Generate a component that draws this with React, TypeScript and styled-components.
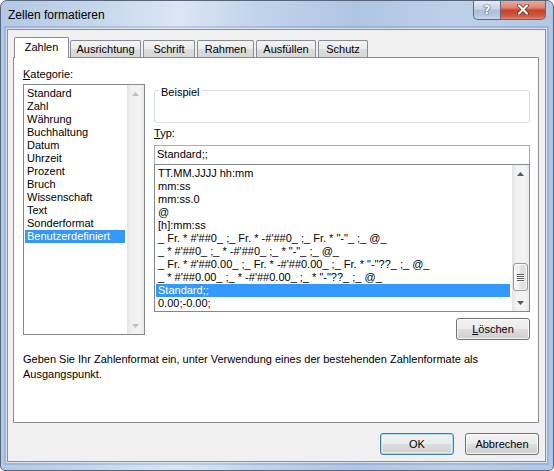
import React from "react";
import styled, { createGlobalStyle, css } from "styled-components";

const GlobalStyle = createGlobalStyle`
  html, body { margin: 0; padding: 0; background: #ffffff; }
  body {
    font-family: "Liberation Sans", Arial, sans-serif;
    font-size: 11px;
    color: #000;
  }
  * { box-sizing: border-box; }
`;

const Window = styled.div`
  width: 554px;
  height: 471px;
  display: flex;
  flex-direction: column;
  padding: 0 7px 8px 6px;
  border: 1px solid #56657b;
  border-radius: 7px 7px 5px 5px;
  background: linear-gradient(
    90deg,
    #b3c8e5 0%,
    #c6d7ed 18%,
    #dbe6f4 32%,
    #c2d4eb 46%,
    #afc5e2 64%,
    #bdd0e9 82%,
    #b1c7e4 100%
  );
  overflow: hidden;
`;

const TitleBar = styled.div`
  height: 28px;
  display: flex;
  align-items: flex-start;
`;

const Title = styled.div`
  font-size: 12px;
  line-height: 28px;
  padding-left: 1px;
  color: #000;
`;

const Captions = styled.div`
  margin: -1px 0 0 auto;
  display: flex;
  height: 20px;
`;

const CaptionButton = styled.div<{ $close?: boolean }>`
  height: 20px;
  display: flex;
  align-items: center;
  justify-content: center;
  border: 1px solid #5a6a82;
  border-top: none;
  ${({ $close }) =>
    $close
      ? css`
          width: 46px;
          border-radius: 0 0 5px 0;
          background: linear-gradient(
            180deg,
            #eab0a2 0%,
            #dc8670 40%,
            #c7432b 55%,
            #cf5a44 85%,
            #e08a76 100%
          );
        `
      : css`
          width: 27px;
          border-right: none;
          border-radius: 0 0 0 5px;
          background: linear-gradient(
            180deg,
            #e6edf6 0%,
            #c9d6e6 45%,
            #aebfd5 55%,
            #b9c9dd 85%,
            #cdd9e8 100%
          );
        `}
`;

const HelpGlyph = styled.span`
  font-family: "DejaVu Sans", sans-serif;
  font-weight: bold;
  font-size: 13px;
  color: #fff;
  text-shadow: 0 0 1px #3b4656, 0 0 1px #3b4656, 0 0 1px #3b4656;
`;

const Client = styled.div`
  flex: 1;
  display: flex;
  flex-direction: column;
  padding: 7px 6px 0 5px;
  background: #f0f0f0;
  border: 1px solid #7f91aa;
  box-shadow: 0 0 0 1px rgba(255, 255, 255, 0.6), 0 0 0 3px rgba(80, 112, 165, 0.22);
`;

const TabRow = styled.div`
  display: flex;
  align-items: flex-end;
  padding-left: 1px;
  margin-bottom: -1px;
  position: relative;
  z-index: 1;
`;

const Tab = styled.div<{ $active?: boolean; $w: number }>`
  width: ${({ $w }) => $w}px;
  display: flex;
  align-items: center;
  justify-content: center;
  border: 1px solid #898c95;
  border-bottom: none;
  border-radius: 2px 2px 0 0;
  margin-right: 1px;
  ${({ $active }) =>
    $active
      ? css`
          height: 21px;
          padding-bottom: 2px;
          background: #ffffff;
          margin-right: 0;
        `
      : css`
          height: 17px;
          margin-bottom: 1px;
          margin-left: 1px;
          background: linear-gradient(180deg, #f3f3f3 0%, #ebebeb 50%, #dddddd 51%, #d6d6d6 100%);
        `}
`;

const Panel = styled.div`
  height: 366px;
  border: 1px solid #898c95;
  background: #ffffff;
  padding: 10px 8px 0 9px;
  display: flex;
  flex-direction: column;
`;

const Body = styled.div`
  display: flex;
  gap: 9px;
  align-items: flex-start;
`;

const LeftColumn = styled.div`
  width: 122px;
  display: flex;
  flex-direction: column;
`;

const RightColumn = styled.div`
  width: 376px;
  display: flex;
  flex-direction: column;
  padding-top: 22px;
`;

const Label = styled.div<{ $gap: number; $top?: number }>`
  line-height: 13px;
  height: 13px;
  margin-top: ${({ $top = 0 }) => $top}px;
  margin-bottom: ${({ $gap }) => $gap}px;
`;

const Key = styled.span`
  text-decoration: underline;
`;

const ListBox = styled.div<{ $h: number }>`
  height: ${({ $h }) => $h}px;
  border: 1px solid #828790;
  background: #fff;
  display: flex;
`;

const Items = styled.div<{ $pad: number }>`
  flex: 1;
  overflow: hidden;
  padding: ${({ $pad }) => $pad}px 1px 0 1px;
  margin-right: 1px;
`;

const Item = styled.div<{ $selected?: boolean }>`
  height: 13px;
  line-height: 13px;
  padding-left: 2px;
  white-space: pre;
  ${({ $selected }) =>
    $selected &&
    css`
      background: #3399ff;
      color: #fff;
    `}
`;

const Track = styled.div`
  width: 17px;
  display: flex;
  flex-direction: column;
  background: linear-gradient(90deg, #e4e4e4 0%, #f1f1f1 25%, #f3f3f3 75%, #e9e9e9 100%);
`;

const ArrowBox = styled.div`
  height: 17px;
  display: flex;
  align-items: center;
  justify-content: center;
`;

const Spacer = styled.div`
  flex: 1;
`;

const Thumb = styled.div<{ $top: number; $h: number }>`
  margin: ${({ $top }) => $top}px 1px 0;
  height: ${({ $h }) => $h}px;
  border: 1px solid #979797;
  border-radius: 3px;
  background: linear-gradient(90deg, #f6f6f6 0%, #ececec 45%, #dcdcdc 55%, #e4e4e4 100%);
  box-shadow: inset 0 0 0 1px rgba(255, 255, 255, 0.7);
  display: flex;
  flex-direction: column;
  align-items: center;
  justify-content: center;
  gap: 1px;
`;

const Grip = styled.div`
  width: 7px;
  height: 1px;
  background: #5a5a5a;
  box-shadow: 0 1px 0 #fdfdfd;
`;

const GroupBox = styled.div`
  height: 33px;
  border: 1px solid #d5dfe5;
  border-radius: 3px;
  box-shadow: inset 1px 1px 0 #fff;
`;

const Legend = styled.div`
  width: fit-content;
  margin: -5px 0 0 4px;
  padding: 0 2px;
  line-height: 13px;
  background: #fff;
`;

const TextInput = styled.div`
  height: 19px;
  border: 1px solid #abadb3;
  border-bottom: none;
  padding: 0 2px;
  line-height: 17px;
  background: #fff;
`;

const Button = styled.div<{ $default?: boolean; $w: number }>`
  width: ${({ $w }) => $w}px;
  height: 22px;
  display: flex;
  align-items: center;
  justify-content: center;
  border: 1px solid #707070;
  border-radius: 3px;
  background: linear-gradient(180deg, #f2f2f2 0%, #ebebeb 48%, #dddddd 52%, #cfcfcf 100%);
  box-shadow: inset 0 0 0 1px rgba(255, 255, 255, 0.8);
  ${({ $default }) =>
    $default &&
    css`
      border-color: #3c7fb1;
      box-shadow: inset 0 0 0 1px #a8e1f4, inset 0 0 0 2px rgba(255, 255, 255, 0.5);
    `}
`;

const ButtonRow = styled.div<{ $top: number; $gap: number }>`
  display: flex;
  justify-content: flex-end;
  gap: ${({ $gap }) => $gap}px;
  margin-top: ${({ $top }) => $top}px;
`;

const Description = styled.div`
  margin-top: 12px;
  line-height: 15px;
  max-width: 470px;
`;

const Arrow = ({ down, disabled }: { down?: boolean; disabled?: boolean }) => (
  <svg width="7" height="4" viewBox="0 0 7 4">
    <path
      d={down ? "M0 0 L7 0 L3.5 4 Z" : "M0 4 L7 4 L3.5 0 Z"}
      fill={disabled ? "#bdbdbd" : "#4f5a6a"}
    />
  </svg>
);

const CloseGlyph = () => (
  <svg width="14" height="11" viewBox="0 0 14 11">
    <path d="M3 1.5 L11 9.5 M11 1.5 L3 9.5" stroke="#5a2a22" strokeWidth="3.6" strokeLinecap="round" />
    <path d="M3 1.5 L11 9.5 M11 1.5 L3 9.5" stroke="#ffffff" strokeWidth="2.2" strokeLinecap="round" />
  </svg>
);

type ScrollProps = { disabled?: boolean; thumbTop?: number; thumbHeight?: number };

const ScrollBar = ({ disabled, thumbTop = 0, thumbHeight = 0 }: ScrollProps) => (
  <Track>
    <ArrowBox>
      <Arrow disabled={disabled} />
    </ArrowBox>
    {disabled ? (
      <Spacer />
    ) : (
      <>
        <Thumb $top={thumbTop} $h={thumbHeight}>
          <Grip />
          <Grip />
          <Grip />
          <Grip />
        </Thumb>
        <Spacer />
      </>
    )}
    <ArrowBox>
      <Arrow down disabled={disabled} />
    </ArrowBox>
  </Track>
);

const tabs = [
  { label: "Zahlen", w: 55, active: true },
  { label: "Ausrichtung", w: 71 },
  { label: "Schrift", w: 52 },
  { label: "Rahmen", w: 57 },
  { label: "Ausfüllen", w: 60 },
  { label: "Schutz", w: 50 },
];

const categories = [
  "Standard",
  "Zahl",
  "Währung",
  "Buchhaltung",
  "Datum",
  "Uhrzeit",
  "Prozent",
  "Bruch",
  "Wissenschaft",
  "Text",
  "Sonderformat",
  "Benutzerdefiniert",
];

const formats = [
  "TT.MM.JJJJ hh:mm",
  "mm:ss",
  "mm:ss.0",
  "@",
  "[h]:mm:ss",
  "_ Fr. * #'##0_ ;_ Fr. * -#'##0_ ;_ Fr. * \"-\"_ ;_ @_",
  "_ * #'##0_ ;_ * -#'##0_ ;_ * \"-\"_ ;_ @_",
  "_ Fr. * #'##0.00_ ;_ Fr. * -#'##0.00_ ;_ Fr. * \"-\"??_ ;_ @_",
  "_ * #'##0.00_ ;_ * -#'##0.00_ ;_ * \"-\"??_ ;_ @_",
  "Standard;;",
  "0.00;-0.00;",
];

export default function App() {
  return (
    <>
      <GlobalStyle />
      <Window>
        <TitleBar>
          <Title>Zellen formatieren</Title>
          <Captions>
            <CaptionButton>
              <HelpGlyph>?</HelpGlyph>
            </CaptionButton>
            <CaptionButton $close>
              <CloseGlyph />
            </CaptionButton>
          </Captions>
        </TitleBar>
        <Client>
          <TabRow>
            {tabs.map((t) => (
              <Tab key={t.label} $active={t.active} $w={t.w}>
                {t.label}
              </Tab>
            ))}
          </TabRow>
          <Panel>
            <Body>
              <LeftColumn>
                <Label $gap={3}>
                  <Key>K</Key>ategorie:
                </Label>
                <ListBox $h={251}>
                  <Items $pad={2}>
                    {categories.map((c) => (
                      <Item key={c} $selected={c === "Benutzerdefiniert"}>
                        {c}
                      </Item>
                    ))}
                  </Items>
                  <ScrollBar disabled />
                </ListBox>
              </LeftColumn>
              <RightColumn>
                <GroupBox>
                  <Legend>Beispiel</Legend>
                </GroupBox>
                <Label $gap={5} $top={4}>
                  <Key>T</Key>yp:
                </Label>
                <TextInput>Standard;;</TextInput>
                <ListBox $h={148}>
                  <Items $pad={2}>
                    {formats.map((f) => (
                      <Item key={f} $selected={f === "Standard;;"}>
                        {f}
                      </Item>
                    ))}
                  </Items>
                  <ScrollBar thumbTop={81} thumbHeight={28} />
                </ListBox>
                <ButtonRow $top={6} $gap={0}>
                  <Button $w={74}>
                    <Key>L</Key>öschen
                  </Button>
                </ButtonRow>
              </RightColumn>
            </Body>
            <Description>
              Geben Sie Ihr Zahlenformat ein, unter Verwendung eines der bestehenden Zahlenformate als
              Ausgangspunkt.
            </Description>
          </Panel>
          <ButtonRow $top={10} $gap={11}>
            <Button $default $w={74}>
              OK
            </Button>
            <Button $w={74}>Abbrechen</Button>
          </ButtonRow>
        </Client>
      </Window>
    </>
  );
}
